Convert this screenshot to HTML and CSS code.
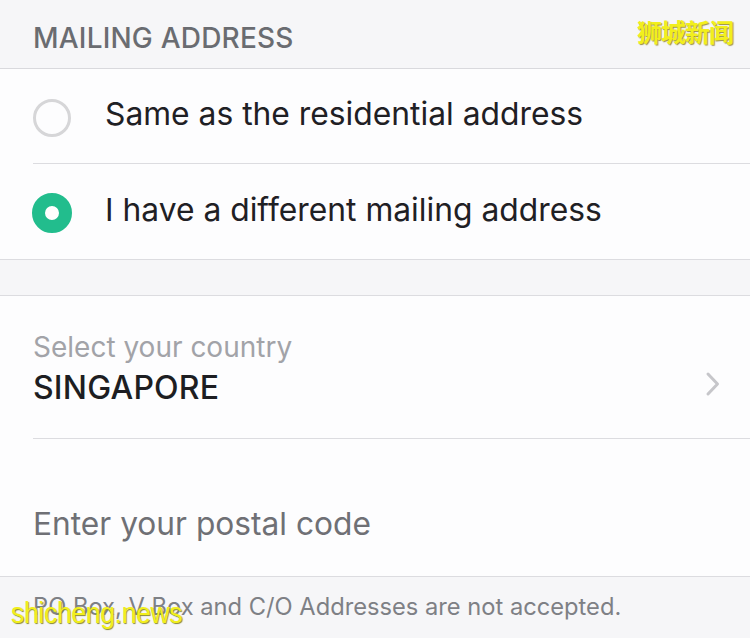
FILE: index.html
```html
<!DOCTYPE html>
<html>
<head>
<meta charset="utf-8">
<link rel="stylesheet" href="styles.css">
</head>
<body>
<div class="page">
  <div class="section-head">MAILING ADDRESS</div>
  <div class="group">
    <div class="option">
      <span class="radio"></span>
      <span class="option-label">Same as the residential address</span>
    </div>
    <div class="option">
      <span class="radio checked"></span>
      <span class="option-label">I have a different mailing address</span>
    </div>
  </div>
  <div class="spacer"></div>
  <div class="group">
    <div class="field country">
      <div class="field-text">
        <div class="field-label">Select your country</div>
        <div class="field-value">SINGAPORE</div>
      </div>
      <svg class="chevron" width="18" height="28" viewBox="0 0 18 28"><path d="M4 4 L13.5 14 L4 24" fill="none" stroke="#c6c6ca" stroke-width="3" stroke-linecap="round" stroke-linejoin="round"/></svg>
    </div>
    <div class="field postal">
      <div class="placeholder">Enter your postal code</div>
    </div>
  </div>
  <div class="note">PO Box, V Box and C/O Addresses are not accepted.</div>
  <div class="wm-top">狮城新闻</div>
  <div class="wm-bottom">shicheng.news</div>
</div>
</body>
</html>
```
FILE: styles.css
```css
* { box-sizing: border-box; }
html, body { margin: 0; padding: 0; }
body {
  width: 750px;
  height: 638px;
  overflow: hidden;
  background: #f6f6f8;
  font-family: Inter, "Noto Sans", sans-serif;
}
.page { position: relative; width: 750px; height: 638px; }
.section-head {
  height: 69px;
  padding: 21px 0 0 33px;
  font-size: 28px;
  font-weight: 500;
  color: #6a6c71;
  letter-spacing: 0.2px;
  border-bottom: 1px solid #d9d9dd;
}
.group {
  background: #fdfdfe;
  padding-left: 33px;
  border-bottom: 1px solid #dcdce0;
}
.option {
  height: 95px;
  display: flex;
  align-items: center;
  border-bottom: 1px solid #dcdce0;
}
.option:last-child { border-bottom: none; }
.radio {
  width: 38px;
  height: 38px;
  border-radius: 50%;
  border: 3px solid #d6d6d8;
  flex: none;
  margin-right: 34px;
  margin-top: 3px;
}
.radio.checked {
  border: 13px solid #22bd8d;
  background: #fff;
  width: 40px;
  height: 40px;
  margin-left: -1px;
  margin-right: 33px;
}
.option-label {
  font-size: 31.8px;
  color: #1f2024;
  margin-top: -5px;
}
.spacer {
  height: 36px;
  border-bottom: 1px solid #dcdce0;
}
.field { border-bottom: 1px solid #dcdce0; }
.country {
  height: 143px;
  display: flex;
  align-items: center;
  padding-right: 28px;
  padding-top: 4px;
}
.field-text { flex: 1; }
.field-label {
  font-size: 28px;
  color: #a2a3a8;
  line-height: 36px;
}
.field-value {
  font-size: 32px;
  font-weight: 500;
  color: #1d1e22;
  line-height: 44px;
  margin-top: 1px;
  letter-spacing: 0.2px;
}
.chevron { flex: none; margin-top: 30px; }
.postal {
  height: 137px;
  border-bottom: none;
  display: flex;
  align-items: center;
}
.placeholder {
  font-size: 31.7px;
  color: #6f7075;
  margin-top: 32px;
}
.note {
  padding: 15px 0 0 33px;
  font-size: 23.7px;
  color: #7e8085;
}
.wm-top {
  position: absolute;
  top: 13px;
  left: 637px;
  font-family: "Noto Sans CJK SC", sans-serif;
  font-size: 25px;
  font-weight: 700;
  color: #f2ef1c;
  text-shadow: 1px 1px 1px #9a9040;
  letter-spacing: -1px;
}
.wm-bottom {
  position: absolute;
  top: 596px;
  left: 11px;
  font-family: "Liberation Sans Narrow", "Liberation Sans", sans-serif;
  font-size: 30px;
  color: #f2ef1c;
  text-shadow: 1px 1px 1px #8a8a30;
  transform: scaleX(0.88);
  transform-origin: left top;
  letter-spacing: -0.3px;
}
```
